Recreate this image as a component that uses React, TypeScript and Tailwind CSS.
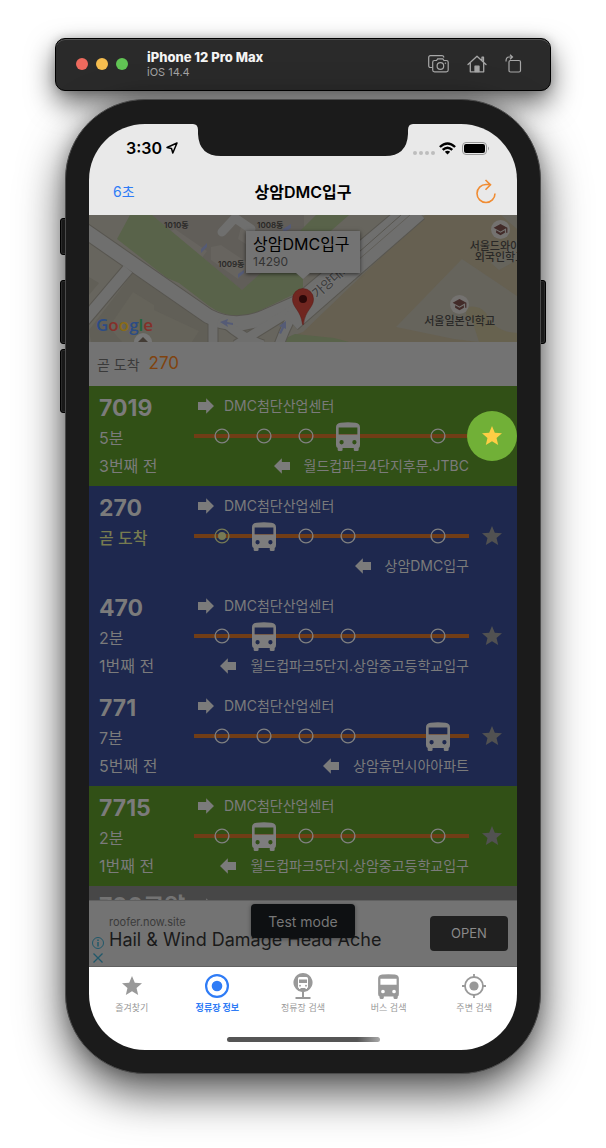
import React from "react";

type Direction = "left" | "right";

type BusRow = {
  route: string;
  time: string;
  before?: string;
  arriving?: boolean;
  towards: string;
  from: string;
  busAt: number;
  markFirst?: boolean;
  color: "green" | "blue";
  favorite?: boolean;
};

const rows: BusRow[] = [
  { route: "7019", time: "5분", before: "3번째 전", towards: "DMC첨단산업센터", from: "월드컵파크4단지후문.JTBC", busAt: 3, color: "green", favorite: true },
  { route: "270", time: "곧 도착", arriving: true, towards: "DMC첨단산업센터", from: "상암DMC입구", busAt: 1, markFirst: true, color: "blue" },
  { route: "470", time: "2분", before: "1번째 전", towards: "DMC첨단산업센터", from: "월드컵파크5단지.상암중고등학교입구", busAt: 1, color: "blue" },
  { route: "771", time: "7분", before: "5번째 전", towards: "DMC첨단산업센터", from: "상암휴먼시아아파트", busAt: 4, color: "blue" },
  { route: "7715", time: "2분", before: "1번째 전", towards: "DMC첨단산업센터", from: "월드컵파크5단지.상암중고등학교입구", busAt: 1, color: "green" },
];

function BusIcon({ className }: { className: string }) {
  return (
    <svg viewBox="0 0 73 88" className={className} fill="currentColor" aria-hidden="true">
      <path
        fillRule="evenodd"
        d="M0 16Q0 4 14 2Q36-1 59 2Q73 4 73 16V70Q73 77 69 79V84Q69 88 65 88H58Q54 88 54 84V79H20V84Q20 88 16 88H9Q5 88 5 84V79Q0 77 0 70ZM8 17V38H65V17ZM17 55a6.500 6.500 0 1 0 0 13a6.500 6.500 0 1 0 0-13ZM56 55a6.500 6.500 0 1 0 0 13a6.500 6.500 0 1 0 0-13Z"
      />
    </svg>
  );
}

function StarIcon({ className }: { className: string }) {
  return (
    <svg viewBox="0 0 24 24" className={className} fill="currentColor" aria-hidden="true">
      <path d="M12 17.270L18.180 21l-1.640-7.030L22 9.240l-7.190-.61L12 2 9.190 8.630 2 9.240l5.460 4.730L5.820 21z" />
    </svg>
  );
}

function ArrowIcon({ to }: { to: Direction }) {
  return (
    <svg viewBox="0 0 47 46" className="h-4 w-4 shrink-0" fill="currentColor" aria-hidden="true">
      <path d={to === "right" ? "M0 11H24V0L47 23L24 46V35H0Z" : "M47 11H23V0L0 23L23 46V35H47Z"} />
    </svg>
  );
}

function Stop({ bus, marked }: { bus: boolean; marked: boolean }) {
  if (bus) return <BusIcon className="h-[29px] w-6 text-[#7d7d7d]" />;
  return (
    <svg viewBox="0 0 16 16" className={`h-4 w-4 ${marked ? "text-[#767a55]" : "text-[#808080]"}`} aria-hidden="true">
      <circle cx="8" cy="8" r="6.900" fill="none" stroke="currentColor" strokeWidth="1.400" />
      {marked && <circle cx="8" cy="8" r="4" fill="currentColor" />}
    </svg>
  );
}

function Route({ row }: { row: BusRow }) {
  return (
    <li className={`flex h-[100px] text-[#7b7b7b] ${row.color === "green" ? "bg-[#315016]" : "bg-[#1e284e]"}`}>
      <div className="w-[105px] shrink-0 pt-[8px] pl-[10px]">
        <h2 className="text-[23px] leading-[28px] font-bold">{row.route}</h2>
        <p className={`mt-[2px] text-[16px] leading-[28px] ${row.arriving ? "font-medium text-[#777b50]" : ""}`}>{row.time}</p>
        <p className="text-[16px] leading-[28px]">{row.before}</p>
      </div>
      <div className="flex min-w-0 flex-1 flex-col justify-center text-[14px]">
        <div className="flex h-[30px] items-center gap-[10px] pl-[4px]">
          <ArrowIcon to="right" />
          <span className="pb-[2px]">{row.towards}</span>
        </div>
        <div className="flex h-[30px] items-center bg-[linear-gradient(#713d16,#713d16)] bg-[length:100%_4px] bg-center bg-no-repeat pr-[10px] pl-[7px]">
          {[0, 1, 2, 3, 4].map((i) => (
            <span key={i} className={`flex w-[42px] justify-center ${i === 4 ? "ml-auto" : ""}`}>
              <Stop bus={row.busAt === i} marked={!!row.markFirst && i === 0} />
            </span>
          ))}
        </div>
        <div className="flex h-[30px] items-center justify-end gap-[14px] whitespace-nowrap">
          <ArrowIcon to="left" />
          <span className="pb-[2px]">{row.from}</span>
        </div>
      </div>
      <div className="flex w-12 shrink-0 items-center justify-end">
        <button
          aria-label={`${row.route} 즐겨찾기`}
          className={`-ml-[2px] flex h-[50px] w-[50px] shrink-0 items-center justify-center rounded-full ${row.favorite ? "bg-[#71b037] text-[#ffce45]" : "text-[#515151]"}`}
        >
          <StarIcon className="h-6 w-6" />
        </button>
      </div>
    </li>
  );
}

function School() {
  return (
    <span className="flex h-[19px] w-[19px] items-center justify-center rounded-full bg-[#747270]">
      <svg viewBox="0 0 24 24" className="h-[15px] w-[15px] fill-[#422b29]" aria-hidden="true">
        <path d="M5 13.180v4L12 21l7-3.820v-4L12 17l-7-3.820zM12 3 1 9l11 6 9-4.910V17h2V9L12 3z" />
      </svg>
    </span>
  );
}

function StopMap() {
  return (
    <section aria-label="지도" className="relative h-[127px] overflow-hidden bg-[#66645d] text-[#292827]">
      <svg viewBox="0 0 428 127" preserveAspectRatio="xMidYMid slice" className="h-full w-full" aria-hidden="true">
        <rect width="428" height="127" fill="#67655e" />
        <path d="M63 0H215V58L180 52L153 75Z" fill="#615e59" />
        <path d="M0 62L10 68L0 80ZM44 58L128 112V127H2L0 115Z" fill="#615f57" />
        <path d="M44 77L65 90V95L110 116L103 127H33L20 112Z" fill="#65635a" />
        <path d="M86 14L118 36L110 47L74 19ZM122 32L132 30L162 50L149 64L122 45ZM152 12L190 34L183 46L149 24Z" fill="#67645f" />
        <path d="M41 0L28 24L78 63L90 68L120 91Q142 107 168 97L214 75V38L190 42L153 75L63 0Z" fill="#59634a" />
        <path d="M227 0H260L235 22H205Z" fill="#59634a" />
        <path d="M336 0H428V127H186L214 117Z" fill="#666051" />
        <path d="M373 44L307 112L365 124L390 127H428V81Z" fill="#66645c" />
        <path d="M376 127H428V118Q405 117 397 98Q390 90 379 92Q373 99 384 108L390 127Z" fill="#67624f" />
        <path d="M412 40L428 24V45L410 55L402 48ZM412 0H428V14Z" fill="#66645c" />
        <path d="M188 127L206 119L245 123L260 127Z" fill="#59634a" />
        <g fill="none" strokeLinejoin="round">
          <g stroke="#585650">
            <path d="M-8 13L119 101Q146 115 176 102L208 88L322-8" strokeWidth="16" />
            <path d="M-5 106L39 54" strokeWidth="13" />
            <path d="M124 106V130M208 94Q199 105 190 130M132 103Q148 121 174 130M147 130L205 94" strokeWidth="11" />
            <path d="M202 107L329-4" strokeWidth="21" />
          </g>
          <g stroke="#6f6f6e">
            <path d="M-8 13L119 101Q146 115 176 102L208 88L322-8" strokeWidth="14" />
            <path d="M-5 106L39 54" strokeWidth="11" />
            <path d="M124 106V130M208 94Q199 105 190 130M132 103Q148 121 174 130M147 130L205 94" strokeWidth="9" />
            <path d="M202 107L329-4" strokeWidth="19" />
            <path d="M133 17L146 3L162 14" strokeWidth="9" strokeLinecap="round" />
          </g>
          <path d="M253 52L312 0" stroke="#585650" />
          <path d="M260 53L321 0" stroke="#605e58" />
        </g>
        <path d="M118 28V32L112 38V34ZM202 9V13L194 18V14ZM155 55V58L149 63V59Z" fill="#555b76" />
        <path d="M131 107L139 104L138 107L144 108V110L138 109L139 112ZM197 106L197 114L195 113L192 119L190 118L193 112L190 111Z" fill="#555b76" />
        <text transform="translate(228 84) rotate(-42)" fontSize="13" fill="#3c3c3c" stroke="#747474" strokeWidth="2" paintOrder="stroke">가양대로</text>
        <circle cx="54" cy="127" r="9" fill="#777" />
        <path d="M49 127L54 122L59 127Z" fill="#433c35" />
      </svg>
      <span className="absolute top-[4px] left-[75px] text-[8px] leading-3 font-semibold">1010동</span>
      <span className="absolute top-[4px] left-[168px] text-[8px] leading-3 font-semibold">1008동</span>
      <span className="absolute top-[43px] left-[129px] text-[8px] leading-3 font-semibold">1009동</span>
      <div className="absolute top-[5px] -right-[26px] flex w-[86px] flex-col items-center text-[11px] leading-[11px] font-medium whitespace-nowrap">
        <School />
        <span className="mt-[2px]">서울드와이트</span>
        <span>외국인학교</span>
      </div>
      <div className="absolute top-[80px] right-[22px] flex flex-col items-center text-[11px] leading-[14px] font-medium">
        <School />
        <span>서울일본인학교</span>
      </div>
      <div className="absolute bottom-[7px] left-[7px] font-['Open_Sans'] text-[17px] leading-5 font-semibold" aria-label="Google">
        <span className="text-[#2c4c85]">G</span>
        <span className="text-[#84302a]">o</span>
        <span className="text-[#8a6b16]">o</span>
        <span className="text-[#2c4c85]">g</span>
        <span className="text-[#23653a]">l</span>
        <span className="text-[#84302a]">e</span>
      </div>
      <svg viewBox="0 0 22 37" className="absolute top-[73px] left-1/2 h-[37px] w-[22px] -translate-x-1/2" aria-hidden="true">
        <path d="M11 .500A10.500 10.500 0 0 1 21.500 11C21.500 20 13 22 11.500 36.500H10.500C9 22 .500 20 .500 11A10.500 10.500 0 0 1 11 .500Z" fill="#702620" stroke="#5b1c18" strokeWidth=".5" />
        <circle cx="11" cy="11" r="4" fill="#2c0808" />
      </svg>
      <div className="absolute top-[16px] left-1/2 h-[42px] w-[114px] -translate-x-1/2 bg-[#737373] pl-[7px] shadow-[0_1px_4px_rgba(0,0,0,0.6)]">
        <p className="pt-[3px] text-[16px] leading-[21px] whitespace-nowrap text-black">상암DMC입구</p>
        <p className="text-[12px] leading-[14px] text-[#333]">14290</p>
        <svg viewBox="0 0 14 6" className="absolute top-full left-1/2 h-[6px] w-[14px] -translate-x-1/2" aria-hidden="true">
          <path d="M0 0H14L7 6Z" fill="#737373" />
        </svg>
      </div>
    </section>
  );
}

function WindowBar() {
  return (
    <header className="mx-[55px] flex h-[53px] items-center rounded-[10px] border border-black bg-[#2a2a2a] pr-[28px] pb-[2px] pl-[20px] shadow-[0_12px_28px_rgba(0,0,0,0.6),0_0_10px_rgba(0,0,0,0.2),inset_0_1px_0_#555]">
      <div className="flex gap-2">
        <button aria-label="Close" className="h-3 w-3 rounded-full bg-[#ed6a5e]" />
        <button aria-label="Minimize" className="h-3 w-3 rounded-full bg-[#f5bd4f]" />
        <button aria-label="Zoom" className="h-3 w-3 rounded-full bg-[#61c454]" />
      </div>
      <div className="ml-[19px] pt-[2px]">
        <h1 className="text-[13px] leading-[15px] font-extrabold text-[#f4f4f4]">iPhone 12 Pro Max</h1>
        <p className="text-[11px] leading-[14px] text-[#a5a5a5]">iOS 14.4</p>
      </div>
      <div className="ml-auto flex items-center gap-[18px] text-[#a7a7a7]">
        <button aria-label="Screenshot">
          <svg viewBox="0 0 21 18" className="h-[18px] w-[21px]" fill="none" stroke="currentColor" strokeWidth="1.2">
            <path d="M4.500 12.500H2.500Q.700 12.500.700 10.700V2.500Q.700.700 2.500.700H14Q15.500.700 16 2.500" />
            <path d="M6.500 5.500H8.500L9.700 3.800H14.800L16 5.500H18.300Q20.200 5.500 20.200 7.300V15Q20.200 16.800 18.300 16.800H6.500Q4.700 16.800 4.700 15V7.300Q4.700 5.500 6.500 5.500Z" />
            <circle cx="12.400" cy="11" r="3.300" />
            <circle cx="17.400" cy="8.200" r=".5" fill="currentColor" strokeWidth=".5" />
          </svg>
        </button>
        <button aria-label="Home">
          <svg viewBox="0 0 20 18" className="h-[18px] w-[20px]" fill="none" stroke="currentColor" strokeWidth="1.300" strokeLinejoin="round" strokeLinecap="round">
            <path d="M1 9.500L10 1.200L19 9.500M3.300 8V16.800H16.700V8M15 5.500V2.200H16.500V6.500" />
            <path d="M8 16.500V11.200H12V16.500Z" fill="currentColor" />
          </svg>
        </button>
        <button aria-label="Rotate">
          <svg viewBox="0 0 17 19" className="h-[19px] w-[17px]" fill="none" stroke="currentColor" strokeWidth="1.200">
            <rect x="4" y="6.500" width="11.500" height="11.500" rx="1.500" />
            <path d="M1 7.500Q1 3 4 3H7M5 .700L7.500 3L5 5.300" />
          </svg>
        </button>
      </div>
    </header>
  );
}

function ScreenHeader() {
  return (
    <header className="bg-[#e9e9e9] text-black">
      <div className="flex h-12 items-center pr-[27px] pl-[37px]">
        <span className="text-[16px] font-semibold">3:30</span>
        <svg viewBox="0 0 12 12" className="ml-[4px] h-3 w-3" fill="none" stroke="currentColor" strokeWidth="1.500" strokeLinejoin="round" aria-hidden="true">
          <path d="M11 1L1 5.500L5.500 6.500L6.800 11Z" />
        </svg>
        <div className="ml-auto flex items-center">
          <div className="flex gap-[2px] pt-[9px]">
            {[0, 1, 2, 3].map((i) => (
              <span key={i} className="h-[4px] w-[4px] rounded-full bg-[#bdbdbd]" />
            ))}
          </div>
          <svg viewBox="0 0 17 13" className="ml-[4px] h-[13px] w-[17px]" fill="none" stroke="#000" strokeWidth="2.400" aria-hidden="true">
            <path d="M.900 5Q8.500-2.200 16.100 5M3.700 7.900Q8.500 3.500 13.300 7.900" />
            <path d="M5.800 9.800Q8.500 7.700 11.200 9.800L8.500 12.600Z" fill="#000" stroke="none" />
          </svg>
          <svg viewBox="0 0 28 13" className="ml-[6px] h-[13px] w-[28px]" aria-hidden="true">
            <rect x=".5" y=".5" width="24" height="12" rx="3.500" fill="none" stroke="#999" />
            <rect x="2" y="2" width="21" height="9" rx="2" />
            <path d="M26 4.500Q28 6.500 26 8.500Z" fill="#999" />
          </svg>
        </div>
      </div>
      <div className="grid h-[43px] grid-cols-[1fr_auto_1fr] items-center px-[20px] pb-1">
        <button className="justify-self-start pl-[4px] text-[14px] text-[#2f7cf6]">6초</button>
        <h2 className="text-[16px] font-semibold">상암DMC입구</h2>
        <button aria-label="새로고침" className="justify-self-end">
          <svg viewBox="0 0 22 26" className="h-[26px] w-[22px]" fill="none" stroke="#f08c33" strokeWidth="1.600" aria-hidden="true">
            <path d="M20 14.500A9 9 0 1 1 11 5.500H15.500M10.500 1L15.500 5.800L10.500 10.800" />
          </svg>
        </button>
      </div>
    </header>
  );
}

function Ad() {
  return (
    <aside className="relative flex h-[67px] items-center border-y border-[#606060] bg-[#737373] pr-[9px] pl-[2px]">
      <div className="flex w-[13px] flex-col items-center gap-[3px] self-end pb-[2px] text-[#20586a]">
        <svg viewBox="0 0 12 12" className="h-3 w-3" fill="none" stroke="currentColor" strokeWidth="1" aria-hidden="true">
          <circle cx="6" cy="6" r="5.500" />
          <path d="M6 2.500V4M6 5V9.500" strokeWidth="1.500" />
        </svg>
        <svg viewBox="0 0 12 12" className="h-3 w-3" fill="none" stroke="currentColor" strokeWidth="1.300" aria-hidden="true">
          <path d="M1.500 1.500L10.500 10.500M10.500 1.500L1.500 10.500" />
        </svg>
      </div>
      <div className="min-w-0 flex-1 pb-[2px] pl-[5px] whitespace-nowrap">
        <p className="text-[11px] leading-[14px] text-[#3b3b3b]">roofer.now.site</p>
        <p className="text-[18px] leading-[22px] text-[#1a1a1a]">Hail &amp; Wind Damage Head Ache</p>
      </div>
      <button className="h-[35px] w-[78px] shrink-0 rounded-[4px] bg-[#202020] text-[13px] text-[#8a8a8a]">OPEN</button>
      <div className="absolute top-[3px] left-1/2 flex h-[34px] w-[104px] -translate-x-1/2 items-center justify-center rounded-[4px] bg-[#0e1012] text-[14px] text-[#777] shadow-[0_1px_4px_rgba(0,0,0,0.4)]">
        Test mode
      </div>
    </aside>
  );
}

const tabs = [
  { label: "즐겨찾기", icon: <StarIcon className="h-6 w-6" /> },
  {
    label: "정류장 정보",
    active: true,
    icon: (
      <svg viewBox="0 0 24 24" className="h-6 w-6" aria-hidden="true">
        <circle cx="12" cy="12" r="10.900" fill="none" stroke="currentColor" strokeWidth="2.200" />
        <circle cx="12" cy="12" r="5.300" fill="currentColor" />
      </svg>
    ),
  },
  {
    label: "정류장 검색",
    icon: (
      <svg viewBox="0 0 20 26" className="h-[26px] w-5" fill="currentColor" aria-hidden="true">
        <path
          fillRule="evenodd"
          d="M10 0A9.500 9.500 0 0 1 14.500 17.900L11 19V24H17.500V26H2.500V24H9V19L5.500 17.900A9.500 9.500 0 0 1 10 0ZM6.500 4Q5 4 5 5.500V14Q5 15 6 15V16H7.500V15H12.500V16H14V15Q15 15 15 14V5.500Q15 4 13.500 4ZM6 6.500H14V10H6ZM7 11.800a.900.900 0 1 1 0 1.800a.900.900 0 1 1 0-1.800ZM13 11.800a.900.900 0 1 1 0 1.800a.900.900 0 1 1 0-1.800Z"
        />
      </svg>
    ),
  },
  { label: "버스 검색", icon: <BusIcon className="h-[25px] w-[21px]" /> },
  {
    label: "주변 검색",
    icon: (
      <svg viewBox="0 0 24 24" className="h-6 w-6" fill="none" stroke="currentColor" strokeWidth="1.800" aria-hidden="true">
        <circle cx="12" cy="12" r="9" />
        <circle cx="12" cy="12" r="4.600" fill="currentColor" stroke="none" />
        <path d="M12 0V4M12 20V24M0 12H4M20 12H24" />
      </svg>
    ),
  },
];

function TabBar() {
  return (
    <footer className="flex h-[83px] flex-col bg-white">
      <nav className="grid grid-cols-5 pt-[6px]">
        {tabs.map((t) => (
          <button key={t.label} className={`flex flex-col items-center gap-[2px] ${t.active ? "font-bold text-[#2f7cf6]" : "text-[#999]"}`}>
            <span className="flex h-[26px] items-center">{t.icon}</span>
            <span className="text-[9px] leading-[14px]">{t.label}</span>
          </button>
        ))}
      </nav>
      <div className="mx-auto mt-auto mb-2 h-[5px] w-[153px] rounded-full bg-linear-to-r from-[#555] from-85% to-[#aaa]" />
    </footer>
  );
}

const sideKey = "absolute w-[7px] border border-black bg-[#2a2a2a] shadow-[inset_0_0_0_1px_#444]";

export default function App() {
  return (
    <main className="mx-auto w-full max-w-[606px] overflow-hidden bg-white pt-[38px] pb-[74px] font-['Inter','Noto_Sans_CJK_KR',sans-serif]">
      <WindowBar />
      <div className="relative mx-[65px] mt-2">
        <span className={`${sideKey} top-[119px] -left-[5px] h-[37px] rounded-l-[3px]`} />
        <span className={`${sideKey} top-[181px] -left-[5px] h-[64px] rounded-l-[3px]`} />
        <span className={`${sideKey} top-[250px] -left-[5px] h-[64px] rounded-l-[3px]`} />
        <span className={`${sideKey} top-[181px] -right-[5px] h-[64px] rounded-r-[3px]`} />
        <div className="relative rounded-[80px] border border-[#4a4a4a] bg-[#1b1b1b] px-[23px] pt-[24px] pb-[23px] shadow-[0_18px_46px_rgba(0,0,0,0.7),0_0_16px_rgba(0,0,0,0.2)]">
          <div className="relative overflow-hidden rounded-[56px]">
            <svg viewBox="0 0 220 32" className="absolute top-0 left-1/2 h-8 w-[220px] -translate-x-1/2 fill-[#1b1b1b]" aria-hidden="true">
              <path d="M0 0Q5 0 5 6V10Q6 32 28 32H192Q214 32 215 10V6Q215 0 220 0Z" />
            </svg>
            <ScreenHeader />
            <StopMap />
            <div className="flex h-11 items-center gap-[9px] bg-[#737373] pl-[8px]">
              <span className="text-[14px] text-[#3a3a3a]">곧 도착</span>
              <span className="text-[17px] text-[#80430f]">270</span>
            </div>
            <ul>
              {rows.map((row) => (
                <Route key={row.route} row={row} />
              ))}
            </ul>
            <div className="flex h-[14px] items-start overflow-hidden bg-[#474747] pt-[6px] pl-[10px] text-[#737373]">
              <span className="w-[99px] text-[23px] leading-[28px] font-bold">700고양</span>
              <span className="flex h-7 items-center gap-[10px] text-[14px]">
                <ArrowIcon to="right" />
                DMC첨단산업센터
              </span>
            </div>
            <Ad />
            <TabBar />
          </div>
        </div>
      </div>
    </main>
  );
}
